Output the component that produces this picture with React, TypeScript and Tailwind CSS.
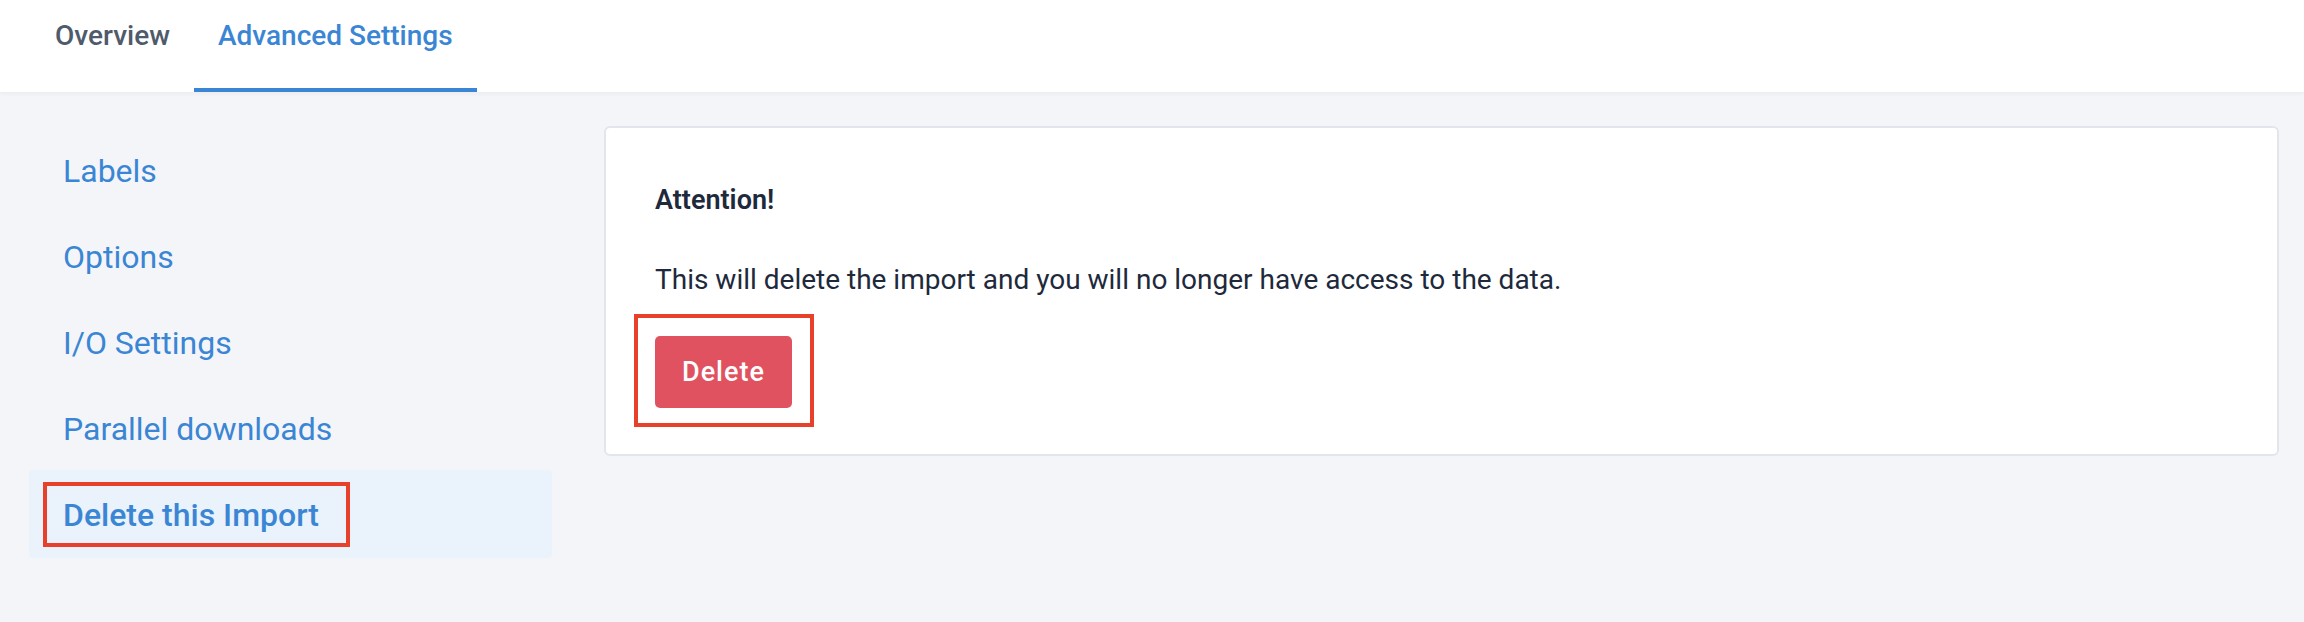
import React from "react";

const sideItems = ["Labels", "Options", "I/O Settings", "Parallel downloads"];

export default function App() {
  return (
    <div className="min-h-screen bg-[#f4f5f9] font-['Roboto',sans-serif]">
      {/* tabs header */}
      <div className="bg-white h-[92px] flex pl-[31px] shadow-[0_2px_4px_rgba(0,0,0,0.04)] relative">
        <div className="px-[24px] pt-[19px] text-[28px] leading-[33px] font-medium text-[#4f5a6b]">Overview</div>
        <div className="px-[24px] pt-[19px] text-[28px] leading-[33px] font-medium text-[#3a86d4] border-b-4 border-[#3a86d4]">
          Advanced Settings
        </div>
      </div>

      <div className="flex items-start gap-[52px] pl-[29px] pr-[25px] pt-[34px]">
        {/* sidebar */}
        <div className="w-[523px] shrink-0 flex flex-col">
          {sideItems.map((item) => (
            <div key={item} className="h-[86px] flex items-center pl-[34px] pt-[3px] text-[32px] text-[#3a86d4]">
              {item}
            </div>
          ))}
          <div className="relative h-[88px] flex items-center pl-[34px] pt-[1px] text-[32px] font-medium text-[#3a86d4] bg-[#eaf2fb] rounded-[4px]">
            Delete this Import
            <div className="absolute left-[14px] top-[12px] w-[307px] h-[65px] border-4 border-[#e8412b]"></div>
          </div>
        </div>

        {/* card */}
        <div className="flex-1 bg-white border-2 border-[#e2e6ec] rounded-[6px] pl-[49px] pt-[56px] pb-[46px]">
          <div className="text-[27px] leading-[32px] font-semibold text-[#1e293b]">Attention!</div>
          <p className="mt-[47px] text-[28px] leading-[33px] text-[#1e293b]">
            This will delete the import and you will no longer have access to the data.
          </p>
          <div className="mt-[40px] relative w-fit">
            <button className="h-[72px] px-[27px] rounded-[5px] bg-[#e0525f] text-white text-[27px] font-medium tracking-[1px]">
              Delete
            </button>
            <div className="absolute left-[-21px] top-[-22px] w-[180px] h-[113px] border-4 border-[#e8412b]"></div>
          </div>
        </div>
      </div>
    </div>
  );
}
